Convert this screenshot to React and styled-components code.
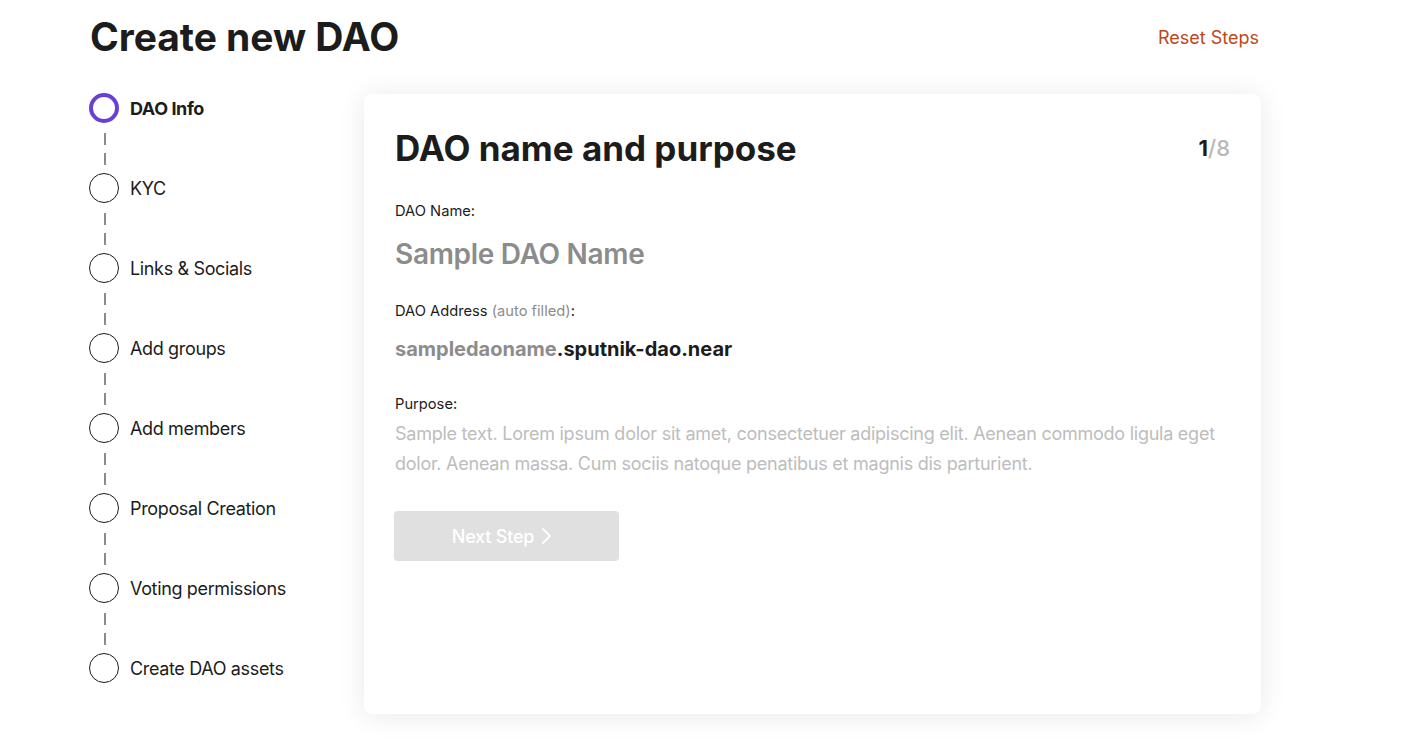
import React from 'react';
import styled, { createGlobalStyle } from 'styled-components';

const GlobalStyle = createGlobalStyle`
	body {
		margin: 0;
		background: #ffffff;
		font-family: Inter, 'Noto Sans', sans-serif;
		color: #1c1c1c;
	}
`;

const steps = [
	'DAO Info',
	'KYC',
	'Links & Socials',
	'Add groups',
	'Add members',
	'Proposal Creation',
	'Voting permissions',
	'Create DAO assets',
];

function App() {
	return (
		<>
			<GlobalStyle />
			<Page>
				<Header>
					<Title>Create new DAO</Title>
					<ResetLink href='#'>Reset Steps</ResetLink>
				</Header>
				<Body>
					<StepList>
						{steps.map((step, i) => (
							<li key={step}>
								<StepRow>
									<Circle active={i === 0} />
									<StepLabel active={i === 0}>{step}</StepLabel>
								</StepRow>
								{i < steps.length - 1 && <Connector />}
							</li>
						))}
					</StepList>
					<Card>
						<CardHeader>
							<CardTitle>DAO name and purpose</CardTitle>
							<Counter>
								<b>1</b>/8
							</Counter>
						</CardHeader>
						<FieldLabel>DAO Name:</FieldLabel>
						<NameValue>Sample DAO Name</NameValue>
						<FieldLabel gap={29}>
							DAO Address <Muted>(auto filled)</Muted>:
						</FieldLabel>
						<AddressValue>
							<Muted>sampledaoname</Muted>.sputnik-dao.near
						</AddressValue>
						<FieldLabel gap={31}>Purpose:</FieldLabel>
						<Purpose>
							Sample text. Lorem ipsum dolor sit amet, consectetuer adipiscing
							elit. Aenean commodo ligula eget dolor. Aenean massa. Cum sociis
							natoque penatibus et magnis dis parturient.
						</Purpose>
						<NextButton disabled>
							Next Step
							<svg width='12' height='20' viewBox='0 0 12 20' fill='none'>
								<path
									d='M3 3l7 7-7 7'
									stroke='#ffffff'
									strokeWidth='2'
									strokeLinecap='round'
									strokeLinejoin='round'
								/>
							</svg>
						</NextButton>
					</Card>
				</Body>
			</Page>
		</>
	);
}

export default App;

const Page = styled.div`
	width: 1172px;
	margin-left: 89px;
	padding-bottom: 38px;
`;

const Header = styled.header`
	display: flex;
	justify-content: space-between;
	align-items: center;
	height: 74px;
	padding-left: 1px;
`;

const Title = styled.h1`
	margin: 0;
	font-size: 39px;
	line-height: 46px;
	font-weight: 700;
	letter-spacing: -0.05px;
	color: #1c1c1c;
`;

const ResetLink = styled.a`
	margin-right: 2px;
	font-size: 18px;
	color: #c0461c;
	text-decoration: none;
`;

const Body = styled.div`
	display: flex;
	margin-top: 19px;
`;

const StepList = styled.ul`
	list-style: none;
	margin: 0;
	padding: 0;
	width: 275px;
	flex-shrink: 0;
`;

const StepRow = styled.div`
	display: flex;
	align-items: center;
	gap: 11px;
	height: 30px;
`;

const Circle = styled.span`
	box-sizing: border-box;
	width: 30px;
	height: 30px;
	border-radius: 50%;
	border: ${({ active }) => (active ? '4px solid #6a3fd6' : '1.5px solid #1c1c1c')};
`;

const StepLabel = styled.span`
	font-size: 18px;
	font-weight: ${({ active }) => (active ? 700 : 400)};
	letter-spacing: ${({ active }) => (active ? '-0.4px' : '-0.35px')};
	color: #1c1c1c;
`;

const Connector = styled.div`
	width: 1.5px;
	height: 32px;
	margin: 10px 0 8px 15px;
	background: repeating-linear-gradient(
		to bottom,
		#8a8a8a 0 12px,
		transparent 12px 20px
	);
`;

const Card = styled.section`
	box-sizing: border-box;
	flex: 1;
	height: 620px;
	margin-top: 1px;
	padding: 34px 31px 0 31px;
	background: #ffffff;
	border-radius: 8px;
	box-shadow: 0 2px 28px rgba(0, 0, 0, 0.09);
`;

const CardHeader = styled.div`
	display: flex;
	justify-content: space-between;
	align-items: center;
`;

const CardTitle = styled.h2`
	margin: 0;
	font-size: 35px;
	line-height: 40px;
	font-weight: 700;
	color: #1c1c1c;
`;

const Counter = styled.span`
	font-size: 22px;
	color: #b8b8b8;
	font-weight: 500;

	b {
		color: #1c1c1c;
		font-weight: 700;
	}
`;

const FieldLabel = styled.div`
	margin-top: ${({ gap }) => gap ?? 33}px;
	font-size: 14.7px;
	line-height: 20px;
	color: #1c1c1c;
`;

const Muted = styled.span`
	color: #8c8c8c;
`;

const NameValue = styled.div`
	margin-top: 15px;
	font-size: 28px;
	line-height: 36px;
	font-weight: 600;
	letter-spacing: -0.3px;
	color: #8c8c8c;
`;

const AddressValue = styled.div`
	margin-top: 14px;
	font-size: 20px;
	line-height: 28px;
	font-weight: 700;
	color: #1c1c1c;
`;

const Purpose = styled.p`
	margin: 5px 0 0;
	font-size: 18px;
	line-height: 30px;
	letter-spacing: -0.25px;
	color: #bdbdbd;
`;

const NextButton = styled.button`
	display: flex;
	align-items: center;
	justify-content: center;
	gap: 6px;
	width: 225px;
	height: 50px;
	margin: 32px 0 0 -1px;
	padding: 0 9px 0 0;
	border: none;
	border-radius: 4px;
	background: #e0e0e0;
	color: #ffffff;
	font-family: Inter, sans-serif;
	font-size: 18px;
	font-weight: 500;
	letter-spacing: -0.2px;
`;
